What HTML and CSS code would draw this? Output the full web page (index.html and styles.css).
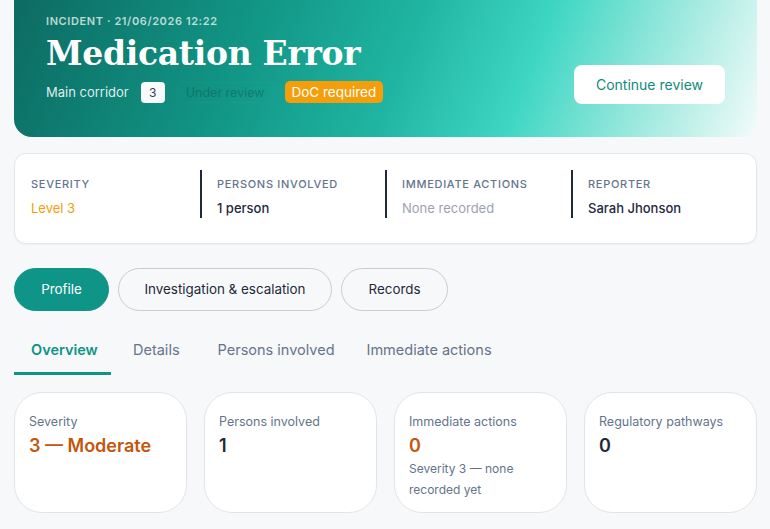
FILE: index.html
```html
<!DOCTYPE html>
<html lang="en">
<head>
<meta charset="utf-8">
<title>Medication Error</title>
<link rel="stylesheet" href="styles.css">
</head>
<body>
<main class="page">
  <section class="hero">
    <div class="hero-main">
      <div class="eyebrow">INCIDENT · 21/06/2026 12:22</div>
      <h1 class="title">Medication Error</h1>
      <div class="meta">
        <span class="location">Main corridor</span>
        <span class="count">3</span>
        <span class="status">Under review</span>
        <span class="doc">DoC required</span>
      </div>
    </div>
    <button class="continue">Continue review</button>
  </section>

  <section class="summary">
    <div class="sum-col">
      <div class="sum-label">SEVERITY</div>
      <div class="sum-value warn">Level 3</div>
    </div>
    <div class="sum-col">
      <div class="sum-label">PERSONS INVOLVED</div>
      <div class="sum-value">1 person</div>
    </div>
    <div class="sum-col">
      <div class="sum-label">IMMEDIATE ACTIONS</div>
      <div class="sum-value muted">None recorded</div>
    </div>
    <div class="sum-col">
      <div class="sum-label">REPORTER</div>
      <div class="sum-value">Sarah Jhonson</div>
    </div>
  </section>

  <nav class="pills">
    <button class="pill active">Profile</button>
    <button class="pill">Investigation &amp; escalation</button>
    <button class="pill">Records</button>
  </nav>

  <nav class="tabs">
    <a class="tab active">Overview</a>
    <a class="tab">Details</a>
    <a class="tab">Persons involved</a>
    <a class="tab last">Immediate actions</a>
  </nav>

  <section class="cards">
    <div class="card">
      <div class="card-label">Severity</div>
      <div class="card-value orange">3 — Moderate</div>
    </div>
    <div class="card">
      <div class="card-label">Persons involved</div>
      <div class="card-value">1</div>
    </div>
    <div class="card">
      <div class="card-label">Immediate actions</div>
      <div class="card-value orange">0</div>
      <div class="card-note">Severity 3 — none recorded yet</div>
    </div>
    <div class="card">
      <div class="card-label">Regulatory pathways</div>
      <div class="card-value">0</div>
    </div>
  </section>
</main>
</body>
</html>
```
FILE: styles.css
```css
* { box-sizing: border-box; }
html, body { margin: 0; padding: 0; }
body {
  background: #f7f8fa;
  font-family: Inter, "Noto Sans", sans-serif;
  color: #1e293b;
  width: 770px;
  height: 529px;
  overflow: hidden;
}
.page {
  padding: 0 13px 0 14px;
}
.hero {
  height: 137px;
  border-radius: 0 0 18px 18px;
  background: linear-gradient(112deg, #0d6b63 0%, #119484 30%, #20b5a2 52%, #3dd6c3 68%, #8fe6da 82%, #f3fbfa 100%);
  display: flex;
  justify-content: space-between;
  align-items: flex-start;
  padding: 13px 32px 0 32px;
}
.eyebrow {
  font-size: 11px;
  font-weight: 600;
  letter-spacing: 0.6px;
  color: rgba(255,255,255,0.72);
  line-height: 14px;
  margin-top: 1px;
}
.title {
  margin: 4px 0 0 0;
  font-family: "DejaVu Serif", serif;
  font-weight: 700;
  font-size: 33px;
  line-height: 44px;
  color: #fff;
  letter-spacing: -0.3px;
}
.meta {
  display: flex;
  align-items: center;
  margin-top: 5px;
  font-size: 13px;
}
.location { color: rgba(255,255,255,0.88); margin-right: 12px; }
.count {
  background: #f8fafc;
  color: #334155;
  border-radius: 4px;
  width: 24px;
  height: 21px;
  display: flex;
  align-items: center;
  justify-content: center;
  font-size: 12px;
  margin-right: 12px;
}
.status {
  color: rgba(15, 90, 82, 0.5);
  border: 1px solid rgba(255,255,255,0.025);
  border-radius: 5px;
  padding: 2px 8px 2px 8px;
  margin-right: 11px;
  font-size: 12.5px;
}
.doc {
  background: #f59e0b;
  color: #fff;
  border-radius: 5px;
  padding: 3px 7px;
  font-size: 13.5px;
}
.continue {
  margin-top: 52px;
  margin-right: 0;
  width: 151px;
  height: 39px;
  background: #fff;
  border: none;
  border-radius: 8px;
  color: #0f8a7e;
  font-family: Inter, sans-serif;
  font-size: 14px;
}
.summary {
  margin-top: 16px;
  height: 91px;
  background: #fff;
  border: 1px solid #e5e7eb;
  border-radius: 12px;
  box-shadow: 0 1px 2px rgba(0,0,0,0.04);
  display: grid;
  grid-template-columns: 185px 185px 186px 1fr;
  align-items: start;
  padding-top: 16px;
}
.sum-col {
  border-left: 2px solid #1e293b;
  height: 48px;
  padding: 7px 14px 0 15px;
}
.sum-col:first-child { border-left: none; padding-left: 16px; }
.sum-label {
  font-size: 11px;
  font-weight: 500;
  letter-spacing: 0.7px;
  color: #64748b;
  line-height: 14px;
}
.sum-value {
  margin-top: 9px;
  font-size: 13px;
  font-weight: 500;
  color: #1e293b;
  line-height: 16px;
}
.sum-value.warn { color: #f59e0b; font-weight: 400; }
.sum-value.muted { color: #9ca3af; font-weight: 400; }
.pills {
  display: flex;
  gap: 9px;
  margin-top: 24px;
}
.pill {
  height: 43px;
  border-radius: 22px;
  border: 1px solid #c9ccd1;
  background: transparent;
  font-family: Inter, sans-serif;
  font-size: 13.4px;
  color: #1e293b;
  padding: 0 0 2px 0;
  white-space: nowrap;
  text-align: center;
}
.pill.active {
  background: #0f9488;
  border-color: #0f9488;
  color: #fff;
  width: 95px;
}
.pill:nth-child(2) { width: 214px; }
.pill:nth-child(3) { width: 107px; }
.tabs {
  display: flex;
  gap: 6px;
  margin-top: 21px;
  font-size: 14.5px;
}
.tab {
  color: #64748b;
  padding: 9px 16px 14px 16px;
  border-bottom: 3px solid transparent;
  white-space: nowrap;
}
.tab.active {
  color: #0f9488;
  font-weight: 600;
  border-bottom-color: #0f9488;
  width: 97px;
  padding-left: 17px;
}
.tab.last { margin-left: -6px; }
.cards {
  display: grid;
  grid-template-columns: repeat(4, 173px);
  gap: 17px;
  margin-top: 17px;
}
.card {
  height: 121px;
  background: #fff;
  border: 1px solid #e2e4e8;
  border-radius: 28px;
  padding: 21px 15px 0 14px;
}
.card-label {
  font-size: 12.5px;
  color: #64748b;
  line-height: 16px;
}
.card-value {
  margin-top: 4px;
  font-size: 18px;
  font-weight: 600;
  color: #1e293b;
  line-height: 24px;
}
.card-value.orange { color: #c2560c; }
.card-note {
  margin-top: 0;
  font-size: 12px;
  line-height: 21px;
  color: #64748b;
  padding-right: 20px;
}
```
